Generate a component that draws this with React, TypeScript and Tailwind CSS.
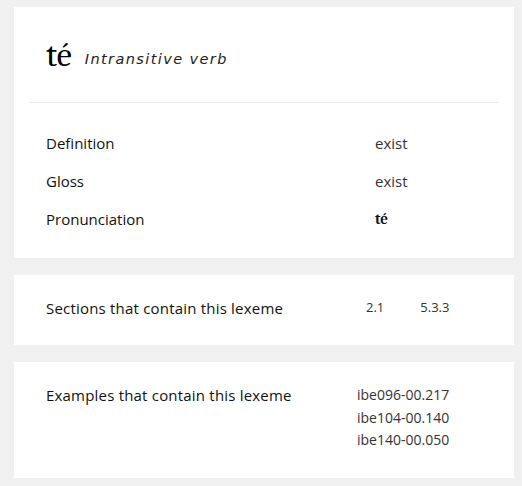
import React from 'react';

const body = "font-['Open_Sans','Noto_Sans',sans-serif]";

function Row({ label, children }: { label: string; children: React.ReactNode }) {
  return (
    <div className="flex h-[38px] items-center">
      <div className="w-[329px] text-[15px] text-[#111]">{label}</div>
      <div className="text-[15px] text-[#333]">{children}</div>
    </div>
  );
}

export default function App() {
  return (
    <div className={`min-h-[486px] w-[522px] bg-[#f0f0f0] pt-[7px] pr-[8px] pl-[14px] ${body}`}>
      <div className="flex flex-col gap-[17px]">
        <div className="bg-white px-[16px] pb-[20px]">
          <div className="flex h-[95px] items-baseline gap-[13px] pl-[16px] pt-[31px]">
            <span className="font-serif text-[34px] leading-none text-black">té</span>
            <span className="relative -top-[2px] font-['DejaVu_Sans',sans-serif] text-[14.5px] italic tracking-[1.4px] text-[#222]">
              Intransitive verb
            </span>
          </div>
          <div className="h-px bg-[#e9e9e9]" />
          <div className="pt-[21px] pl-[16px]">
            <Row label="Definition">exist</Row>
            <Row label="Gloss">exist</Row>
            <Row label="Pronunciation">
              <span className="font-serif text-[15px] font-semibold text-[#111]">té</span>
            </Row>
          </div>
        </div>

        <div className="flex h-[70px] items-center bg-white pb-[4px] pl-[32px]">
          <div className="w-[320px] text-[15px] tracking-[0.2px] text-[#111]">Sections that contain this lexeme</div>
          <div className="flex gap-[36px] text-[13px] text-[#333]">
            <span>2.1</span>
            <span>5.3.3</span>
          </div>
        </div>

        <div className="flex h-[116px] items-start bg-white pt-[22px] pl-[32px]">
          <div className="w-[311px] text-[15px] leading-[22.5px] tracking-[0.2px] text-[#111]">Examples that contain this lexeme</div>
          <div className="flex flex-col text-[14px] leading-[22.5px] text-[#333]">
            <span>ibe096-00.217</span>
            <span>ibe104-00.140</span>
            <span>ibe140-00.050</span>
          </div>
        </div>
      </div>
    </div>
  );
}
